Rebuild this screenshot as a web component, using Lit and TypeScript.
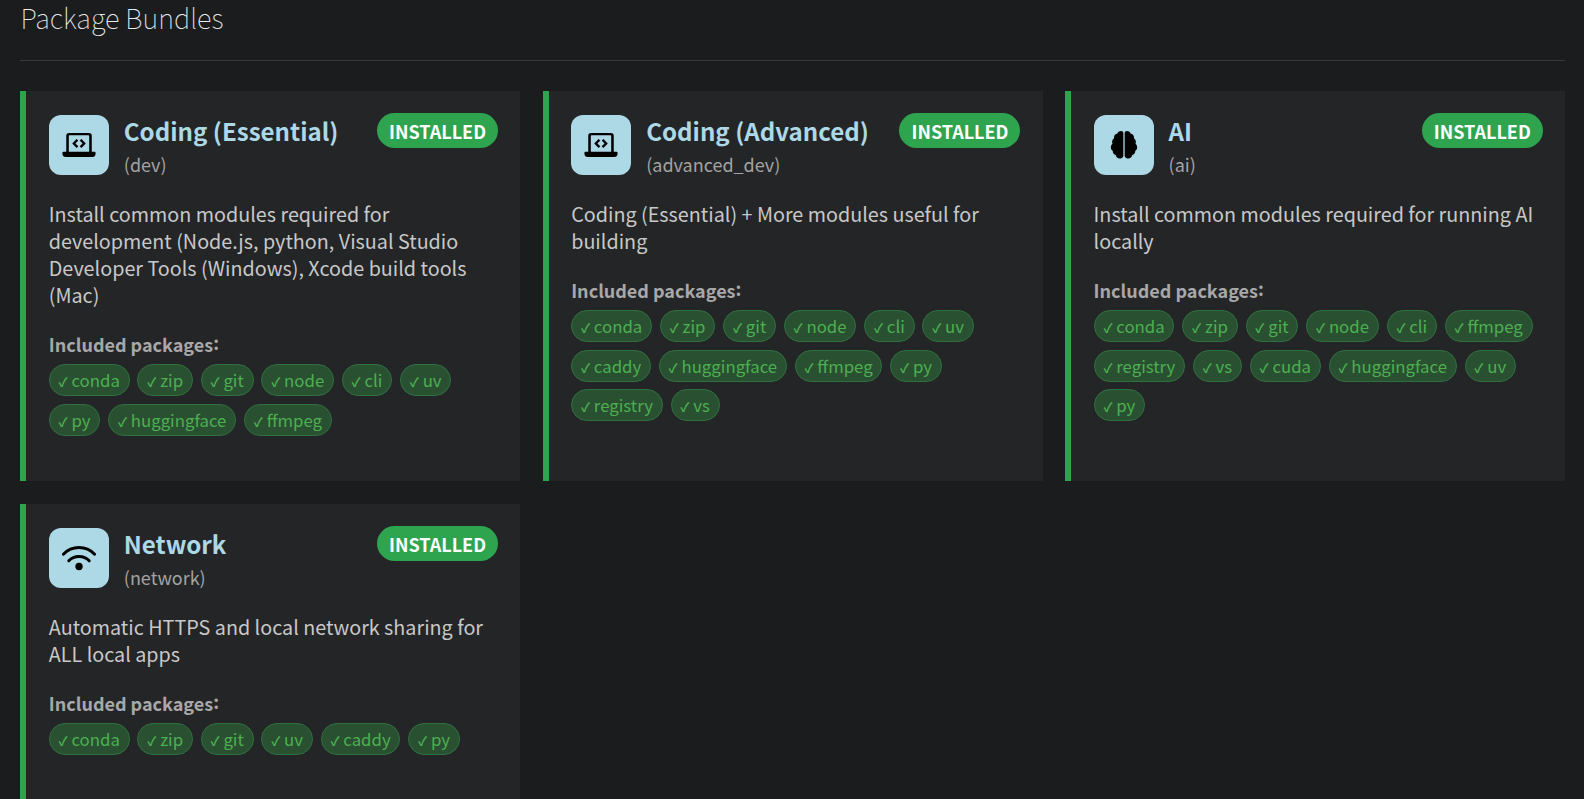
import { LitElement, html, css, svg } from "lit";
import { customElement } from "lit/decorators.js";

const laptop = svg`<path fill-rule="evenodd" d="M5 3.500h14A2 2 0 0 1 21 5.500V16.700h2a.7.7 0 0 1 .7.7v.6a2.500 2.500 0 0 1-2.500 2.500H2.800A2.500 2.500 0 0 1 .3 18v-.6a.7.7 0 0 1 .7-.7h2V5.500A2 2 0 0 1 5 3.500ZM4.800 5.700V16.700h14.400V5.700a.5.5 0 0 0-.5-.5H5.300a.5.5 0 0 0-.5.500Z"/><path d="M10.300 7.700 7.200 10.900l3.100 3.200 1.200-1.200-2-2 2-2ZM13.700 7.700l3.100 3.200-3.100 3.200-1.200-1.200 2-2-2-2Z"/>`;
const lobe = "M12.500 3.600c0-1 .8-1.500 1.800-1.500 1.300 0 2.400.8 2.800 1.900 1.400.1 2.400 1.100 2.500 2.500 0 .3 0 .6-.1.8 1 .5 1.500 1.500 1.500 2.500 0 .5-.1.9-.3 1.300.8.6 1.300 1.500 1.300 2.500 0 1.100-.6 2.100-1.500 2.600.1 1.400-.9 2.600-2.200 2.800-.3 1.400-1.500 2.500-3 2.500-1.300 0-2.800-.8-2.800-2Z";
const brain = svg`<g transform="matrix(.93 0 0 1 .84 0)"><path d=${lobe}/><path d=${lobe} transform="matrix(-1 0 0 1 24 0)"/></g>`;
const wifi = svg`<path d="M1 9.300C7 3 17 3 23 9.300" fill="none" stroke="#000" stroke-width="2.100" stroke-linecap="round"/><path d="M4.800 14C8.500 10 15.500 10 19.200 14" fill="none" stroke="#000" stroke-width="2.100" stroke-linecap="round"/><circle cx="12" cy="18" r="2.600"/>`;

const bundles = [
  { title: "Coding (Essential)", id: "dev", icon: laptop, desc: "Install common modules required for development (Node.js, python, Visual Studio Developer Tools (Windows), Xcode build tools (Mac)", pkgs: ["conda", "zip", "git", "node", "cli", "uv", "py", "huggingface", "ffmpeg"] },
  { title: "Coding (Advanced)", id: "advanced_dev", icon: laptop, desc: "Coding (Essential) + More modules useful for building", pkgs: ["conda", "zip", "git", "node", "cli", "uv", "caddy", "huggingface", "ffmpeg", "py", "registry", "vs"] },
  { title: "AI", id: "ai", icon: brain, desc: "Install common modules required for running AI locally", pkgs: ["conda", "zip", "git", "node", "cli", "ffmpeg", "registry", "vs", "cuda", "huggingface", "uv", "py"] },
  { title: "Network", id: "network", icon: wifi, desc: "Automatic HTTPS and local network sharing for ALL local apps", pkgs: ["conda", "zip", "git", "uv", "caddy", "py"] },
];

@customElement("app-root")
export class AppRoot extends LitElement {
  static styles = css`
    :host {
      display: block;
      height: 799px;
      overflow: hidden;
      background: #1b1c1e;
      font-family: "Noto Sans CJK JP", "Noto Sans", sans-serif;
      color: #c8c8c8;
    }
    .page { padding: 0 18.8px 0 20.4px; }
    h1 {
      margin: 0;
      padding-bottom: 25px;
      border-bottom: 1px solid #36383a;
      height: 35px;
      box-sizing: content-box;
      font-size: 27.2px;
      line-height: 35px;
      font-weight: 100;
      color: #e8eaec;
    }
    .grid {
      margin-top: 30px;
      display: grid;
      grid-template-columns: repeat(3, 1fr);
      gap: 22.4px;
    }
    .card {
      box-sizing: border-box;
      height: 390.400px;
      background: #242527;
      border-left: 6px solid #2ea44f;
      padding: 24px 22.4px;
    }
    .head { display: flex; align-items: flex-start; gap: 15px; }
    .icon {
      flex: none;
      width: 60px;
      height: 60px;
      border-radius: 12px;
      background: #add8e6;
      display: flex;
      align-items: center;
      justify-content: center;
    }
    .icon svg { width: 34px; height: 34px; display: block; }
    .names { flex: 1; min-width: 0; }
    .title {
      font-size: 24.1px;
      line-height: 32px;
      font-weight: 700;
      color: #add8e6;
    }
    .id { font-size: 18px; line-height: 26px; color: #a3a3a3; margin-top: 4px; }
    .badge {
      flex: none;
      margin-top: -2px;
      height: 35px;
      line-height: 36px;
      padding: 0 12px;
      border-radius: 18px;
      background: #2ea44f;
      color: #fff;
      font-size: 18px;
      font-weight: 700;
    }
    .desc {
      margin: 23px 0 0;
      font-size: 19.75px;
      line-height: 27px;
      color: #c8c8c8;
    }
    .inc {
      margin-top: 23px;
      font-size: 18px;
      line-height: 27px;
      font-weight: 700;
      color: #a8a8a8;
    }
    .colon { vertical-align: 2.500px; line-height: 1; }
    .pkgs { display: flex; flex-wrap: wrap; gap: 7.400px 7.800px; margin-top: 6px; }
    .pkg {
      box-sizing: border-box;
      height: 32.200px;
      line-height: 30.200px;
      padding: 0 8.800px;
      border-radius: 16px;
      background: #2a5032;
      border: 1px solid #2f7040;
      color: #4caf50;
      font-size: 16.8px;
    }
    .check {
      font-size: 12.600px;
      font-weight: 700;
      line-height: 1;
    }
  `;

  render() {
    return html`<div class="page">
      <h1>Package Bundles</h1>
      <div class="grid">
        ${bundles.map(
          (b) => html`<div class="card">
            <div class="head">
              <div class="icon"><svg viewBox="0 0 24 24">${b.icon}</svg></div>
              <div class="names">
                <div class="title">${b.title}</div>
                <div class="id">(${b.id})</div>
              </div>
              <div class="badge">INSTALLED</div>
            </div>
            <p class="desc">${b.desc}</p>
            <div class="inc">Included packages<span class="colon">:</span></div>
            <div class="pkgs">${b.pkgs.map((p) => html`<span class="pkg"><span class="check">✓</span> ${p}</span>`)}</div>
          </div>`
        )}
      </div>
    </div>`;
  }
}
